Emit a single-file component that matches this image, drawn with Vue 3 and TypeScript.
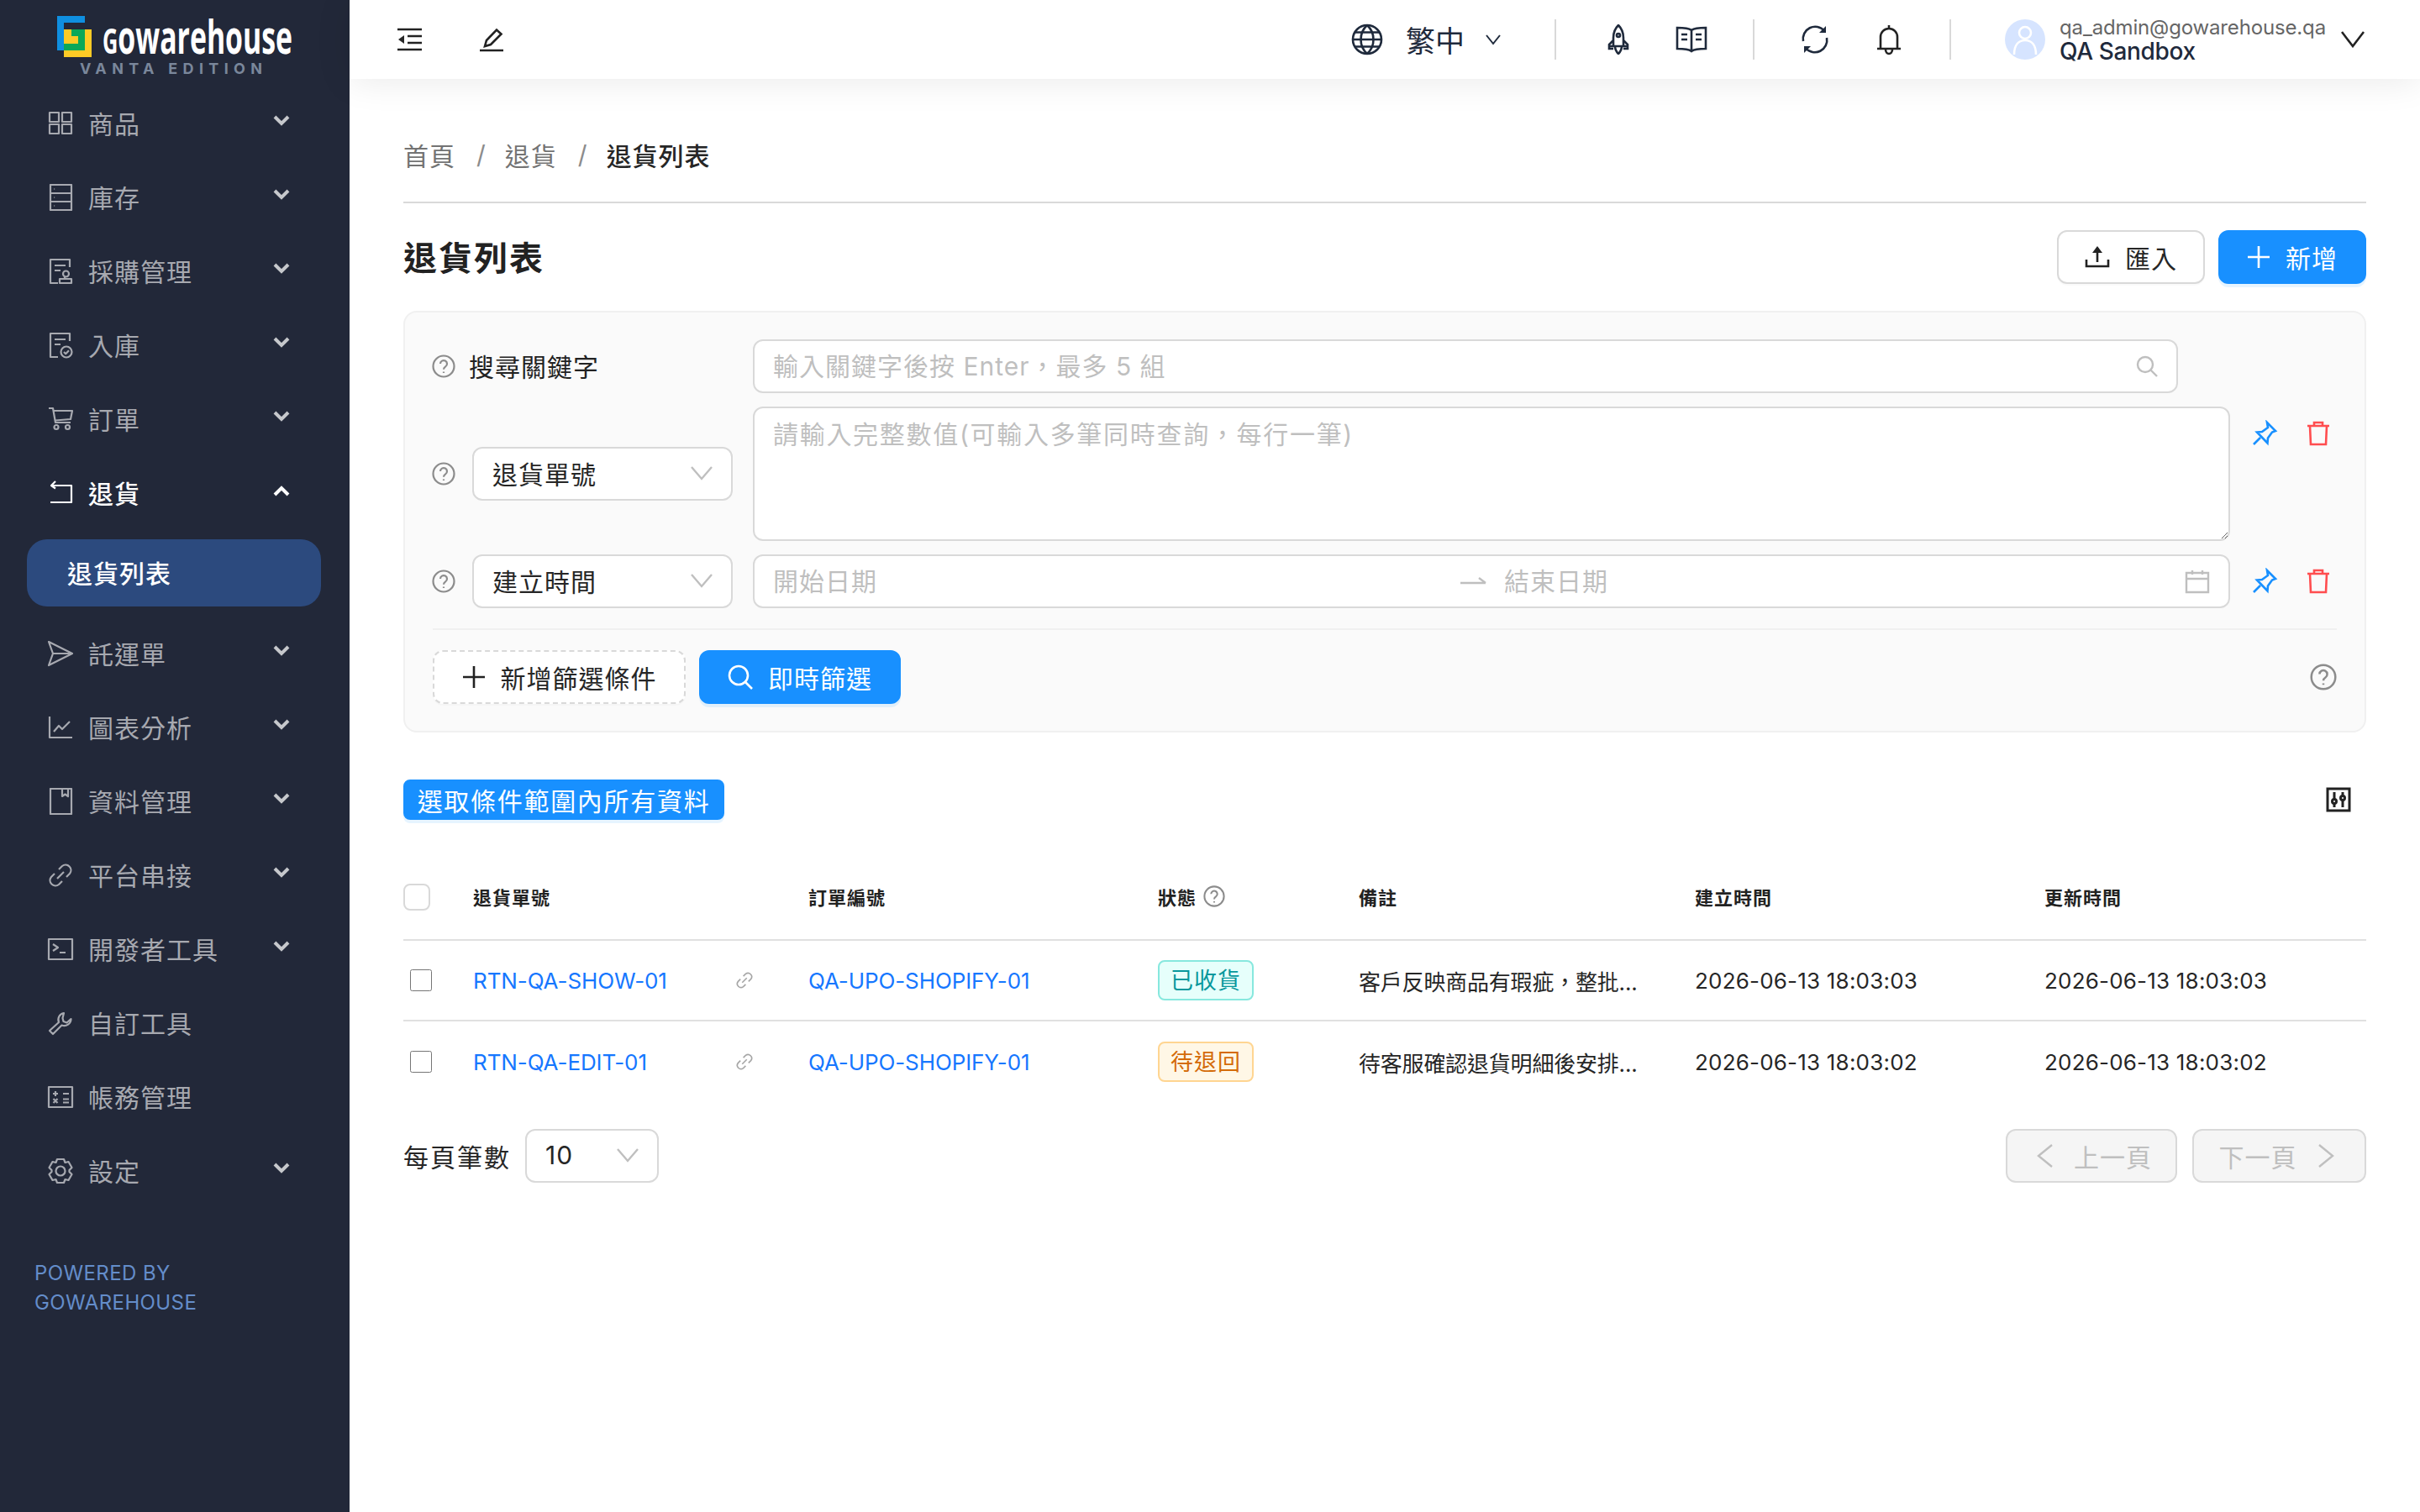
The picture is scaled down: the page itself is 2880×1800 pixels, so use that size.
<script setup lang="ts">
// 退貨列表頁：側欄 + 頂欄 + 篩選面板 + 表格
const circ = (x: number, y: number, r: number) =>
  `M${x - r} ${y}a${r} ${r} 0 1 0 ${2 * r} 0a${r} ${r} 0 1 0 ${-2 * r} 0`;

const docBase = "M27 11V2H4V30H13M9 9H22M9 15H16";

interface MenuItem {
  label: string;
  icon: string[];
  arrow?: boolean;
  open?: boolean;
  children?: string[];
}

const menu: MenuItem[] = [
  { label: "商品", arrow: true, icon: ["M3 3h11v11H3zM18 3h11v11H18zM3 17h11v11H3zM18 17h11v11H18z"] },
  { label: "庫存", arrow: true, icon: ["M4 1h25v30H4zM4 11h25M4 21h25M8.5 6h.6M8.5 16h.6M8.5 26h.6"] },
  { label: "採購管理", arrow: true, icon: [docBase, circ(22.5, 19, 3.5), "M21 23v2M15 25h14v5H15z"] },
  { label: "入庫", arrow: true, icon: [docBase, circ(23, 24, 6.5), "M20 24l2.2 2.2 3.8-4"] },
  { label: "訂單", arrow: true, icon: ["M2 3h5l3 17h18M7.5 6H30l-2 10-18 1.5", circ(11, 25.5, 2.5), circ(24.5, 25.5, 2.5)] },
  { label: "退貨", open: true, arrow: true, children: ["退貨列表"], icon: ["M10 2L5 7l5 3.5M5 7h24v20H4"] },
  { label: "託運單", arrow: true, icon: ["M2 2l28 14L2 30l5-14zM7 16h23"] },
  { label: "圖表分析", arrow: true, icon: ["M3 3v25h27M8 21l6-7 4 4 9-9"] },
  { label: "資料管理", arrow: true, icon: ["M4 1h25v30H4zM18 1v9l3.5-2.5L25 10V1"] },
  { label: "平台串接", arrow: true, icon: ["M14 9l4-4a6.4 6.4 0 0 1 9 9l-4 4M18 23l-4 4a6.4 6.4 0 0 1-9-9l4-4M12 20l8-8"] },
  { label: "開發者工具", arrow: true, icon: ["M2 4h28v24H2zM7 10l6 4-6 4M15 20h7"] },
  { label: "自訂工具", icon: ["M20 4a8 8 0 0 0-6 11L3 25l4 4 10.5-10.5a8 8 0 0 0 11-7.5l-5 4.5-4-1.5-1-4z"] },
  { label: "帳務管理", icon: ["M2 4h28v24H2zM7 12h6M10 9v6M19 12h7M7.5 18l5 5M12.5 18l-5 5M19 18.5h7M19 22.5h7"] },
  {
    label: "設定",
    arrow: true,
    icon: [
      "M12 2h8l1.5 4 4-1 4 7-3 3v2l3 3-4 7-4-1-1.5 4h-8l-1.5-4-4 1-4-7 3-3v-2l-3-3 4-7 4 1z",
      circ(16, 16, 5.5),
    ],
  },
];

const rows = [
  {
    no: "RTN-QA-SHOW-01",
    order: "QA-UPO-SHOPIFY-01",
    status: "已收貨",
    tone: "teal",
    note: "客戶反映商品有瑕疵，整批...",
    created: "2026-06-13 18:03:03",
    updated: "2026-06-13 18:03:03",
  },
  {
    no: "RTN-QA-EDIT-01",
    order: "QA-UPO-SHOPIFY-01",
    status: "待退回",
    tone: "orange",
    note: "待客服確認退貨明細後安排...",
    created: "2026-06-13 18:03:02",
    updated: "2026-06-13 18:03:02",
  },
];
</script>

<template>
  <div class="app">
    <aside class="side">
      <svg class="logo" width="416" height="103" viewBox="0 0 416 103">
        <path d="M68 19h33v8H76v33h-8z" fill="#0f8fe0" />
        <path d="M76 35h33v33H76z" fill="#fdcb26" />
        <path d="M85 35h16v25H76v-8h17v-9h-8z" fill="#0aa858" />
        <text x="122" y="64" class="logo-name" textLength="226" lengthAdjust="spacingAndGlyphs"><tspan font-size="42">G</tspan>owarehouse</text>
        <text x="95" y="88" class="logo-sub" textLength="217">VANTA EDITION</text>
      </svg>

      <nav class="menu">
        <template v-for="m in menu" :key="m.label">
          <div class="item" :class="{ open: m.open }">
            <svg class="mi" width="32" height="32" viewBox="0 0 32 32">
              <path v-for="(d, i) in m.icon" :key="i" :d="d" />
            </svg>
            <span>{{ m.label }}</span>
            <svg v-if="m.arrow" class="arrow" width="20" height="14" viewBox="0 0 20 14">
              <path :d="m.open ? 'M2 11l8-8 8 8' : 'M2 3l8 8 8-8'" />
            </svg>
          </div>
          <div v-for="c in m.children" :key="c" class="sub">{{ c }}</div>
        </template>
      </nav>

      <div class="powered">POWERED BY<br />GOWAREHOUSE</div>
    </aside>

    <div class="right">
      <header class="top">
        <div class="top-left">
          <svg width="30" height="28" viewBox="0 0 30 28" class="ti">
            <path d="M0 2h29M12 10h17M12 18h17M0 26h29" />
            <path d="M8 9v10l-7-5z" class="solid" />
          </svg>
          <svg width="30" height="30" viewBox="0 0 30 30" class="ti">
            <path d="M1 28h28M7 23l2-7L21 3.5l5.5 5L14 21z" />
          </svg>
        </div>
        <div class="top-right">
          <svg width="38" height="38" viewBox="0 0 38 38" class="ti navy">
            <path :d="circ(19, 19, 17)" />
            <path d="M2 19h34M4.500 10.500h29M4.500 27.500h29M19 2c-10 9-10 25 0 34M19 2c10 9 10 25 0 34" />
          </svg>
          <span class="lang">繁中</span>
          <svg width="18" height="14" viewBox="0 0 18 14" class="ti navy thin lang-arrow"><path d="M1 2l8 10 8-10" /></svg>
          <i class="vline" />
          <svg width="36" height="36" viewBox="0 0 36 36" class="ti navy">
            <path d="M18 1c-5 5-6 10-6 15v10h12V16c0-5-1-10-6-15zM12 19l-5 5v5h5M24 19l5 5v5h-5M8 26h20M14 26c0 4 2 7 4 9 2-2 4-5 4-9" />
            <path :d="circ(18, 13, 2)" />
          </svg>
          <svg width="38" height="32" viewBox="0 0 38 32" class="ti navy book">
            <path d="M19 5C15 2 8 2 2 2v25c6 0 13 0 17 3 4-3 11-3 17-3V2c-6 0-13 0-17 3zM19 5v25M7 10h7M7 16h7M24 10h7M24 16h7" />
          </svg>
          <i class="vline" />
          <svg width="36" height="36" viewBox="0 0 36 36" class="ti navy refresh">
            <path d="M4 20A14.500 14.500 0 0 1 29 7.500M32 16A14.500 14.500 0 0 1 7 28.500" />
            <path d="M31 2v8h-8zM5 34v-8h8z" class="solid" />
          </svg>
          <svg width="32" height="38" viewBox="0 0 32 38" class="ti ink bell">
            <path d="M16 2v3M6 30V16a10 10 0 0 1 20 0v14M2 30h28M12 31c0 3 2 5 4 5s4-2 4-5" />
          </svg>
          <i class="vline" />
          <div class="avatar">
            <svg width="48" height="48" viewBox="0 0 48 48">
              <path :d="circ(24, 16, 7)" />
              <path d="M11 42c0-11 5-17 13-17s13 6 13 17" />
            </svg>
          </div>
          <div class="who">
            <div class="mail">qa_admin@gowarehouse.qa</div>
            <div class="name">QA Sandbox</div>
          </div>
          <svg width="28" height="20" viewBox="0 0 28 20" class="ti ink user-arrow"><path d="M1 1l13 17L27 1" /></svg>
        </div>
      </header>

      <main class="main">
        <div class="crumb">
          <span>首頁</span><em>/</em><span>退貨</span><em>/</em><b>退貨列表</b>
        </div>

        <div class="title-row">
          <h1>退貨列表</h1>
          <div class="title-btns">
            <button class="btn">
              <svg width="30" height="28" viewBox="0 0 30 28" class="ti ink">
                <path d="M2 17v8h26v-8M15 20V3" />
                <path d="M15 1l-6 8h12z" class="solid" />
              </svg>
              匯入
            </button>
            <button class="btn primary">
              <svg width="28" height="28" viewBox="0 0 28 28" class="ti white"><path d="M1 14h26M14 1v26" /></svg>
              新增
            </button>
          </div>
        </div>

        <section class="filter">
          <div class="frow">
            <svg class="help" width="28" height="28" viewBox="0 0 28 28">
              <path :d="circ(14, 14, 12.500)" />
              <path d="M10 11a4 4 0 1 1 6.200 3.400c-1.400.9-2.200 1.600-2.200 3.300M14 20.500v1.500" />
            </svg>
            <label class="kw">搜尋關鍵字</label>
            <div class="field kw-field">
              <input type="text" placeholder="輸入關鍵字後按 Enter，最多 5 組" />
              <svg width="26" height="26" viewBox="0 0 26 26" class="ti grey"><path d="M17 17l8 8" /><path :d="circ(11, 11, 9)" /></svg>
            </div>
          </div>

          <div class="frow">
            <svg class="help" width="28" height="28" viewBox="0 0 28 28">
              <path :d="circ(14, 14, 12.500)" />
              <path d="M10 11a4 4 0 1 1 6.200 3.400c-1.400.9-2.200 1.600-2.200 3.300M14 20.500v1.500" />
            </svg>
            <div class="select">
              退貨單號
              <svg width="26" height="18" viewBox="0 0 26 18" class="ti grey thin"><path d="M1 2l12 14L25 2" /></svg>
            </div>
            <textarea placeholder="請輸入完整數值(可輸入多筆同時查詢，每行一筆)"></textarea>
            <div class="acts acts-top">
              <svg width="32" height="32" viewBox="0 0 32 32" class="ti blue">
                <path d="M19 3l10 10-4 1.500-5 7-.5 6L7 14.500l6-.5 7-5zM11 21L3 29" />
              </svg>
              <svg width="32" height="32" viewBox="0 0 32 32" class="ti red">
                <path d="M3 7h26M11 7V3h10v4M6 7l1 22h18l1-22" />
              </svg>
            </div>
          </div>

          <div class="frow">
            <svg class="help" width="28" height="28" viewBox="0 0 28 28">
              <path :d="circ(14, 14, 12.500)" />
              <path d="M10 11a4 4 0 1 1 6.200 3.400c-1.400.9-2.200 1.600-2.200 3.300M14 20.500v1.500" />
            </svg>
            <div class="select">
              建立時間
              <svg width="26" height="18" viewBox="0 0 26 18" class="ti grey thin"><path d="M1 2l12 14L25 2" /></svg>
            </div>
            <div class="field range">
              <input type="text" placeholder="開始日期" />
              <svg width="32" height="14" viewBox="0 0 32 14" class="ti grey range-arrow"><path d="M0 9h30M22 3l8 6" /></svg>
              <input type="text" placeholder="結束日期" />
              <svg width="30" height="30" viewBox="0 0 30 30" class="ti grey"><path d="M2 5h26v23H2zM2 12h26M9 2v5M21 2v5" /></svg>
            </div>
            <div class="acts">
              <svg width="32" height="32" viewBox="0 0 32 32" class="ti blue">
                <path d="M19 3l10 10-4 1.500-5 7-.5 6L7 14.500l6-.5 7-5zM11 21L3 29" />
              </svg>
              <svg width="32" height="32" viewBox="0 0 32 32" class="ti red">
                <path d="M3 7h26M11 7V3h10v4M6 7l1 22h18l1-22" />
              </svg>
            </div>
          </div>

          <div class="fbar">
            <button class="btn dashed">
              <svg width="28" height="28" viewBox="0 0 28 28" class="ti ink"><path d="M1 14h26M14 1v26" /></svg>
              新增篩選條件
            </button>
            <button class="btn primary apply">
              <svg width="30" height="30" viewBox="0 0 30 30" class="ti white"><path d="M20 20l9 9" /><path :d="circ(13, 13, 11)" /></svg>
              即時篩選
            </button>
            <svg class="help big" width="32" height="32" viewBox="0 0 28 28">
              <path :d="circ(14, 14, 12.500)" />
              <path d="M10 11a4 4 0 1 1 6.200 3.400c-1.400.9-2.200 1.600-2.200 3.300M14 20.500v1.500" />
            </svg>
          </div>
        </section>

        <div class="tools">
          <button class="btn primary pick">選取條件範圍內所有資料</button>
          <svg width="30" height="30" viewBox="0 0 30 30" class="ti ink sliders">
            <path d="M2 2h26v26H2zM10 6v8M10 20v4M20 6v4M20 16v8" />
            <path :d="circ(10, 17, 2.500)" />
            <path :d="circ(20, 13, 2.500)" />
          </svg>
        </div>

        <div class="table">
          <div class="tr th">
            <div><span class="head-check" /></div>
            <div>退貨單號</div>
            <div>訂單編號</div>
            <div class="st-head">
              狀態
              <svg class="help small" width="26" height="26" viewBox="0 0 28 28">
                <path :d="circ(14, 14, 12.500)" />
                <path d="M10 11a4 4 0 1 1 6.200 3.400c-1.400.9-2.200 1.600-2.200 3.300M14 20.500v1.500" />
              </svg>
            </div>
            <div>備註</div>
            <div>建立時間</div>
            <div>更新時間</div>
          </div>
          <div v-for="r in rows" :key="r.no" class="tr td">
            <div><input type="checkbox" class="check" /></div>
            <div class="no">
              <a>{{ r.no }}</a>
              <svg width="22" height="22" viewBox="0 0 32 32" class="ti link-i">
                <path d="M14 9l4-4a6.400 6.400 0 0 1 9 9l-4 4M18 23l-4 4a6.400 6.400 0 0 1-9-9l4-4M12 20l8-8" />
              </svg>
            </div>
            <div><a>{{ r.order }}</a></div>
            <div><span class="tag" :class="r.tone">{{ r.status }}</span></div>
            <div class="note">{{ r.note }}</div>
            <div class="time">{{ r.created }}</div>
            <div class="time">{{ r.updated }}</div>
          </div>
        </div>

        <div class="pager">
          <span class="per">每頁筆數</span>
          <div class="select size">
            10
            <svg width="26" height="18" viewBox="0 0 26 18" class="ti grey thin"><path d="M1 2l12 14L25 2" /></svg>
          </div>
          <div class="pages">
            <button class="btn off prev">
              <svg width="20" height="28" viewBox="0 0 20 28" class="ti off-i"><path d="M18 1L2 14l16 13" /></svg>
              上一頁
            </button>
            <button class="btn off next">
              下一頁
              <svg width="20" height="28" viewBox="0 0 20 28" class="ti off-i"><path d="M2 1l16 13L2 27" /></svg>
            </button>
          </div>
        </div>
      </main>
    </div>
  </div>
</template>

<style scoped>
.app { display: flex; min-height: 1800px; font-family: Inter, "Noto Sans CJK TC", sans-serif; font-size: 30px; color: #262626; background: #fff; }
svg { flex: none; display: block; }

.side { width: 416px; flex: none; background: #222839; color: #a7a9b0; }
.logo-name { font-family: "Liberation Sans Narrow", "Open Sans", sans-serif; font-weight: 700; font-size: 56px; fill: #fff; }
.logo-sub { font-family: Inter, sans-serif; font-weight: 700; font-size: 18px; fill: #7a879b; }
.item { height: 88px; display: flex; align-items: center; padding-left: 56px; letter-spacing: 1px; }
.item span { margin-top: -3px; }
.item.open { color: #fff; font-weight: 500; }
.mi { margin-right: 17px; fill: none; stroke: currentColor; stroke-width: 2.2; stroke-linejoin: round; }
.arrow { margin-left: auto; margin-right: 71px; position: relative; top: -4px; fill: none; stroke: #c6c8cc; stroke-width: 4; }
.item.open .arrow { stroke: #fff; top: -2px; }
.sub { margin: 11px 34px 12px 32px; height: 80px; padding-bottom: 3px; box-sizing: border-box; border-radius: 24px; background: #2c4a7e; color: #fff; font-weight: 500; display: flex; align-items: center; padding-left: 48px; letter-spacing: 1px; }
.powered { margin: 60px 0 0 41px; color: #648dca; font-size: 24px; line-height: 35px; letter-spacing: 0.4px; }

.right { flex: 1; min-width: 0; display: flex; flex-direction: column; }
.top { height: 94px; display: flex; align-items: center; justify-content: space-between; background: #fff; box-shadow: 0 2px 44px rgba(0, 0, 0, 0.09); position: relative; }
.top-left { display: flex; align-items: center; gap: 67px; padding-left: 57px; }
.top-right { display: flex; align-items: center; padding-right: 66px; }
.ti { fill: none; stroke: #222; stroke-width: 2.6; }
.ti .solid { fill: currentColor; stroke: none; }
.ti.navy { stroke: #1f2a3c; color: #1f2a3c; }
.ti.ink { stroke: #222; color: #222; }
.ti.thin { stroke-width: 2; }
.ti.grey { stroke: #bfbfbf; stroke-width: 2.4; }
.ti.white { stroke: #fff; }
.ti.blue { stroke: #1890ff; }
.ti.red { stroke: #ff4d4f; }
.lang { margin-left: 27px; font-size: 35px; color: #1f2a3c; margin-top: -2px; letter-spacing: 0; }
.lang-arrow { margin-left: 25px; margin-right: 64px; }
.vline { width: 2px; height: 48px; background: #d9d9d9; }
.vline + svg { margin-left: 56px; }
.book { margin-left: 50px; margin-right: 54px; }
.refresh { margin-right: 52px; position: relative; left: -2px; }
.bell { margin-right: 56px; }
.avatar { margin-left: 64px; width: 48px; height: 48px; border-radius: 50%; background: #d6e4ff; overflow: hidden; }
.avatar svg { fill: none; stroke: #fff; stroke-width: 2.6; }
.who { margin-left: 17px; line-height: 1; }
.mail { font-size: 24px; color: #666; height: 28px; line-height: 28px; letter-spacing: -0.15px; }
.name { font-size: 28px; font-weight: 500; color: #1f2a3c; height: 28px; line-height: 28px; letter-spacing: -0.35px; }
.user-arrow { margin-left: 18px; }

.main { padding: 0 64px; }
.crumb { height: 148px; box-sizing: border-box; padding-top: 34px; border-bottom: 2px solid #d9d9d9; display: flex; align-items: center; letter-spacing: 1px; color: #737373; }
.crumb em { font-style: normal; margin: 0 22px 0 25px; color: #8c8c8c; }
.crumb b { font-weight: 500; color: #262626; }
.title-row { display: flex; align-items: center; justify-content: space-between; margin-top: 32px; height: 64px; }
h1 { margin: -3px 0 0; font-size: 40px; font-weight: 600; letter-spacing: 2px; color: #222; }
.title-btns { display: flex; gap: 16px; }
.btn { height: 64px; width: 176px; border: 2px solid #d9d9d9; border-radius: 12px; background: #fff; display: inline-flex; align-items: center; justify-content: center; gap: 18px; font: inherit; letter-spacing: 1px; color: #262626; padding: 0; box-shadow: 0 2px 0 rgba(0, 0, 0, 0.02); }
.btn.primary { background: #1890ff; border-color: #1890ff; color: #fff; box-shadow: 0 4px 0 rgba(5, 145, 255, 0.1); }

.filter { margin-top: 32px; height: 502px; box-sizing: border-box; background: #fafafa; border: 2px solid #f0f0f0; border-radius: 16px; padding: 32px 33px 0; }
.frow { display: flex; align-items: center; margin-bottom: 16px; }
.help { margin-right: 20px; fill: none; stroke: #8c8c8c; stroke-width: 2.2; }
.frow .help { margin-left: -1px; }
.kw { width: 338px; margin-left: -4px; letter-spacing: 1px; color: #222; padding-bottom: 2px; }
.field { height: 64px; box-sizing: border-box; background: #fff; border: 2px solid #d9d9d9; border-radius: 12px; display: flex; align-items: center; padding: 0 22px; }
.field input { border: none; outline: none; background: transparent; font: inherit; letter-spacing: 1px; flex: 1; min-width: 0; padding: 0; color: #262626; }
input::placeholder, textarea::placeholder { color: #bfbfbf; }
.kw-field { width: 1696px; }
.select { width: 310px; height: 64px; box-sizing: border-box; background: #fff; border: 2px solid #d9d9d9; border-radius: 12px; display: flex; align-items: center; justify-content: space-between; padding: 0 22px 2px; letter-spacing: 1px; margin-right: 24px; flex: none; }
textarea { width: 1758px; height: 160px; box-sizing: border-box; background: #fff; border: 2px solid #d9d9d9; border-radius: 12px; padding: 7px 22px; font: inherit; letter-spacing: 1.7px; outline: none; resize: vertical; display: block; }
.range { width: 1758px; }
.range input:first-child { flex: none; width: 818px; }
.range input:nth-of-type(2) { margin-left: 20px; }
.acts { display: flex; gap: 32px; margin-left: 25px; align-self: center; }
.acts-top { align-self: flex-start; padding-top: 16px; }
.fbar { border-top: 2px solid #f0f0f0; margin-top: 24px; padding-top: 24px; display: flex; align-items: center; gap: 16px; }
.btn.dashed { width: 301px; border-style: dashed; }
.btn.apply { width: 240px; }
.help.big { margin: 0 0 0 auto; }

.tools { margin-top: 56px; display: flex; align-items: center; justify-content: space-between; }
.btn.pick { height: 48px; width: 382px; border-radius: 8px; letter-spacing: 1.7px; }
.sliders { margin-right: 18px; stroke-width: 3; }

.table { margin-top: 42px; }
.tr { display: grid; grid-template-columns: 83px 399px 416px 239px 400px 416px 1fr; align-items: center; }
.th { height: 102px; border-bottom: 2px solid #e0e0e0; font-size: 22px; font-weight: 600; letter-spacing: 1px; color: #222; padding-bottom: 3px; box-sizing: border-box; }
.head-check { display: block; width: 32px; height: 32px; box-sizing: border-box; border: 2px solid #d9d9d9; border-radius: 8px; background: #fff; position: relative; top: 1px; }
.st-head { display: flex; align-items: center; gap: 8px; }
.help.small { margin: 0; }
.td { height: 94px; font-size: 26px; color: #262626; }
.td + .td { border-top: 2px solid #e0e0e0; height: 96px; }
.check { width: 26px; height: 26px; margin: 0 0 0 8px; display: block; }
.no { display: flex; align-items: center; padding-right: 65px; justify-content: space-between; }
a { color: #1677ff; letter-spacing: -0.1px; }
.note { letter-spacing: -0.2px; }
.time { letter-spacing: 0.2px; }
.link-i { stroke: #a6a6a6; stroke-width: 2.4; }
.tag { display: inline-block; height: 48px; line-height: 46px; box-sizing: border-box; padding: 0 13px; border-radius: 8px; border: 2px solid; font-size: 27px; letter-spacing: 1px; }
.tag.teal { background: #e6fffb; border-color: #87e8de; color: #08979c; }
.tag.orange { background: #fff7e6; border-color: #ffd591; color: #d46b08; }

.pager { margin-top: 32px; display: flex; align-items: center; }
.per { letter-spacing: 2px; margin-right: 17px; }
.select.size { width: 159px; margin: 0; }
.pages { margin-left: auto; display: flex; gap: 18px; }
.btn.off { height: 64px; background: #f5f5f5; color: #bfbfbf; box-shadow: none; gap: 24px; }
.btn.prev { width: 204px; padding-left: 7px; }
.btn.next { width: 207px; padding-right: 7px; }
.off-i { stroke: #bfbfbf; stroke-width: 2.4; }
</style>
